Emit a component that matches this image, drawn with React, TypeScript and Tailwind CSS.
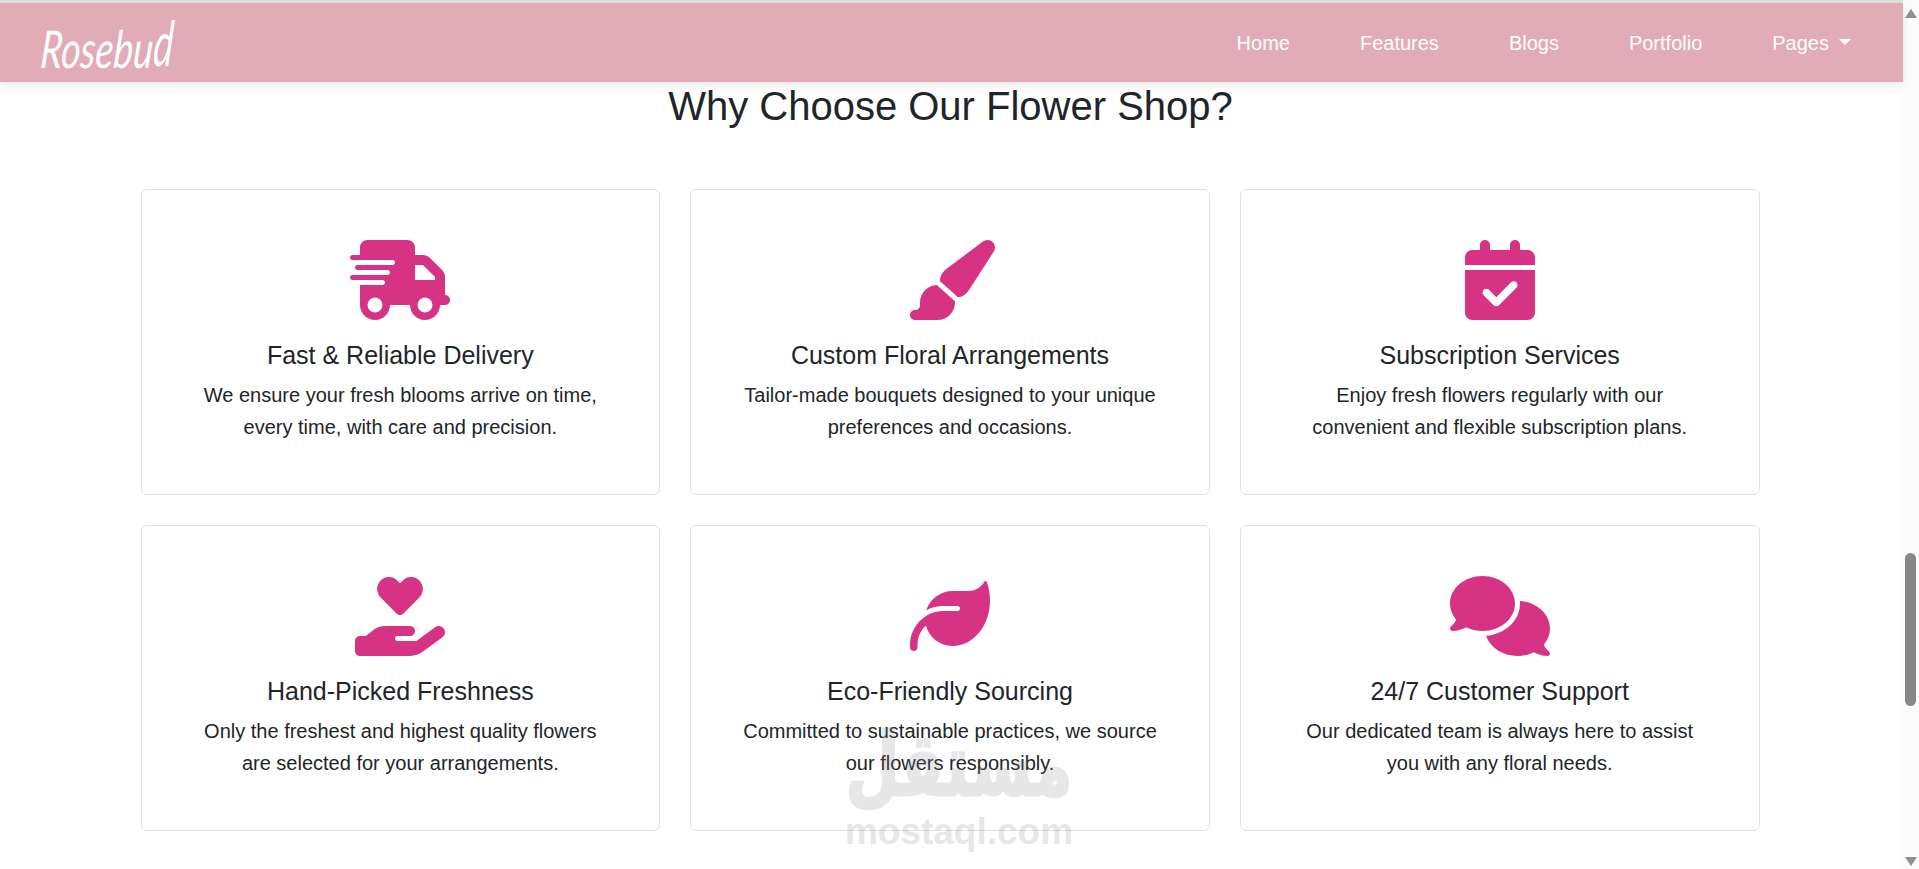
import React from "react";
import { FaTruckFast, FaPaintbrush, FaCalendarCheck, FaHandHoldingHeart, FaLeaf, FaComments } from "react-icons/fa6";

const cards = [
  { icon: FaTruckFast, w: "w-[100px]", title: "Fast & Reliable Delivery", l1: "We ensure your fresh blooms arrive on time,", l2: "every time, with care and precision." },
  { icon: FaPaintbrush, w: "w-[90px]", title: "Custom Floral Arrangements", l1: "Tailor-made bouquets designed to your unique", l2: "preferences and occasions." },
  { icon: FaCalendarCheck, w: "w-[70px]", title: "Subscription Services", l1: "Enjoy fresh flowers regularly with our", l2: "convenient and flexible subscription plans." },
  { icon: FaHandHoldingHeart, w: "w-[90px]", title: "Hand-Picked Freshness", l1: "Only the freshest and highest quality flowers", l2: "are selected for your arrangements." },
  { icon: FaLeaf, w: "w-[80px]", title: "Eco-Friendly Sourcing", l1: "Committed to sustainable practices, we source", l2: "our flowers responsibly." },
  { icon: FaComments, w: "w-[100px]", title: "24/7 Customer Support", l1: "Our dedicated team is always here to assist", l2: "you with any floral needs." },
];

const links = ["Home", "Features", "Blogs", "Portfolio"];

export default function App() {
  return (
    <div className="relative flex h-[869px] w-full overflow-hidden bg-white font-['Liberation_Sans',Arial,sans-serif] text-[#212529]">
      <div className="flex w-[1903px] flex-col">
        <div className="h-[3px] bg-[#e0e0e0]" />
        <header className="z-10 flex h-[79px] items-center justify-between bg-[#e1acb6] pl-[41px] pr-[52px] shadow-[0_4px_8px_rgba(0,0,0,0.08)]">
          <span className="mt-[10px] inline-block origin-left -skew-x-[6deg] scale-x-[0.72] font-['Lato',sans-serif] text-[52px] leading-[60px] font-normal whitespace-nowrap text-white italic">
            Rosebu<span className="inline-block origin-bottom-left scale-y-[1.2]">d</span>
          </span>
          <nav className="flex items-center gap-[70px] text-[20px] text-white">
            {links.map((l) => (
              <a key={l}>{l}</a>
            ))}
            <a className="flex items-center gap-[10px]">
              Pages
              <span className="mb-[2px] h-0 w-0 border-x-[6px] border-t-[6px] border-x-transparent border-t-white" />
            </a>
          </nav>
        </header>
        <main className="flex flex-col">
          <h2 className="pr-[2px] text-center text-[40px] leading-[48px] font-normal">Why Choose Our Flower Shop?</h2>
          <div className="mt-[59px] ml-[140.5px] grid w-[1619px] grid-cols-3 gap-[30px]">
            {cards.map((c) => {
              const Icon = c.icon;
              return (
                <div key={c.title} className="flex h-[306px] flex-col items-center rounded-[6px] border border-[#dee2e6] pt-[50px] text-center">
                  <Icon className={"h-[80px] text-[#d63384] " + c.w} />
                  <h3 className="mt-[21px] text-[25px] leading-[29px] font-normal">{c.title}</h3>
                  <p className="mt-[9px] text-[20px] leading-[32px]">
                    {c.l1}
                    <br />
                    {c.l2}
                  </p>
                </div>
              );
            })}
          </div>
        </main>
      </div>
      <div className="flex w-[16px] flex-col items-center justify-between bg-[#fbfbfb] pt-[9px] pb-[3px]">
        <span className="h-0 w-0 border-x-[6px] border-b-[9px] border-x-transparent border-b-[#8f8f8f]" />
        <span className="h-0 w-0 border-x-[6px] border-t-[9px] border-x-transparent border-t-[#8f8f8f]" />
      </div>
      <div className="absolute top-[553px] left-[1905px] h-[153px] w-[11px] rounded-full bg-[#878787]" />
      <div className="pointer-events-none absolute top-[738px] left-[845px] flex w-[228px] flex-col items-center text-[#8a8a8a] opacity-20">
        <span className="origin-bottom translate-y-[5px] scale-y-[1.4] font-['DejaVu_Sans',sans-serif] text-[62px] leading-[74px] font-bold [-webkit-text-stroke:2px_#8a8a8a]" dir="rtl">مستقل</span>
        <span className="font-['Liberation_Sans',sans-serif] text-[37px] leading-[40px] font-bold">mostaql.com</span>
      </div>
    </div>
  );
}
